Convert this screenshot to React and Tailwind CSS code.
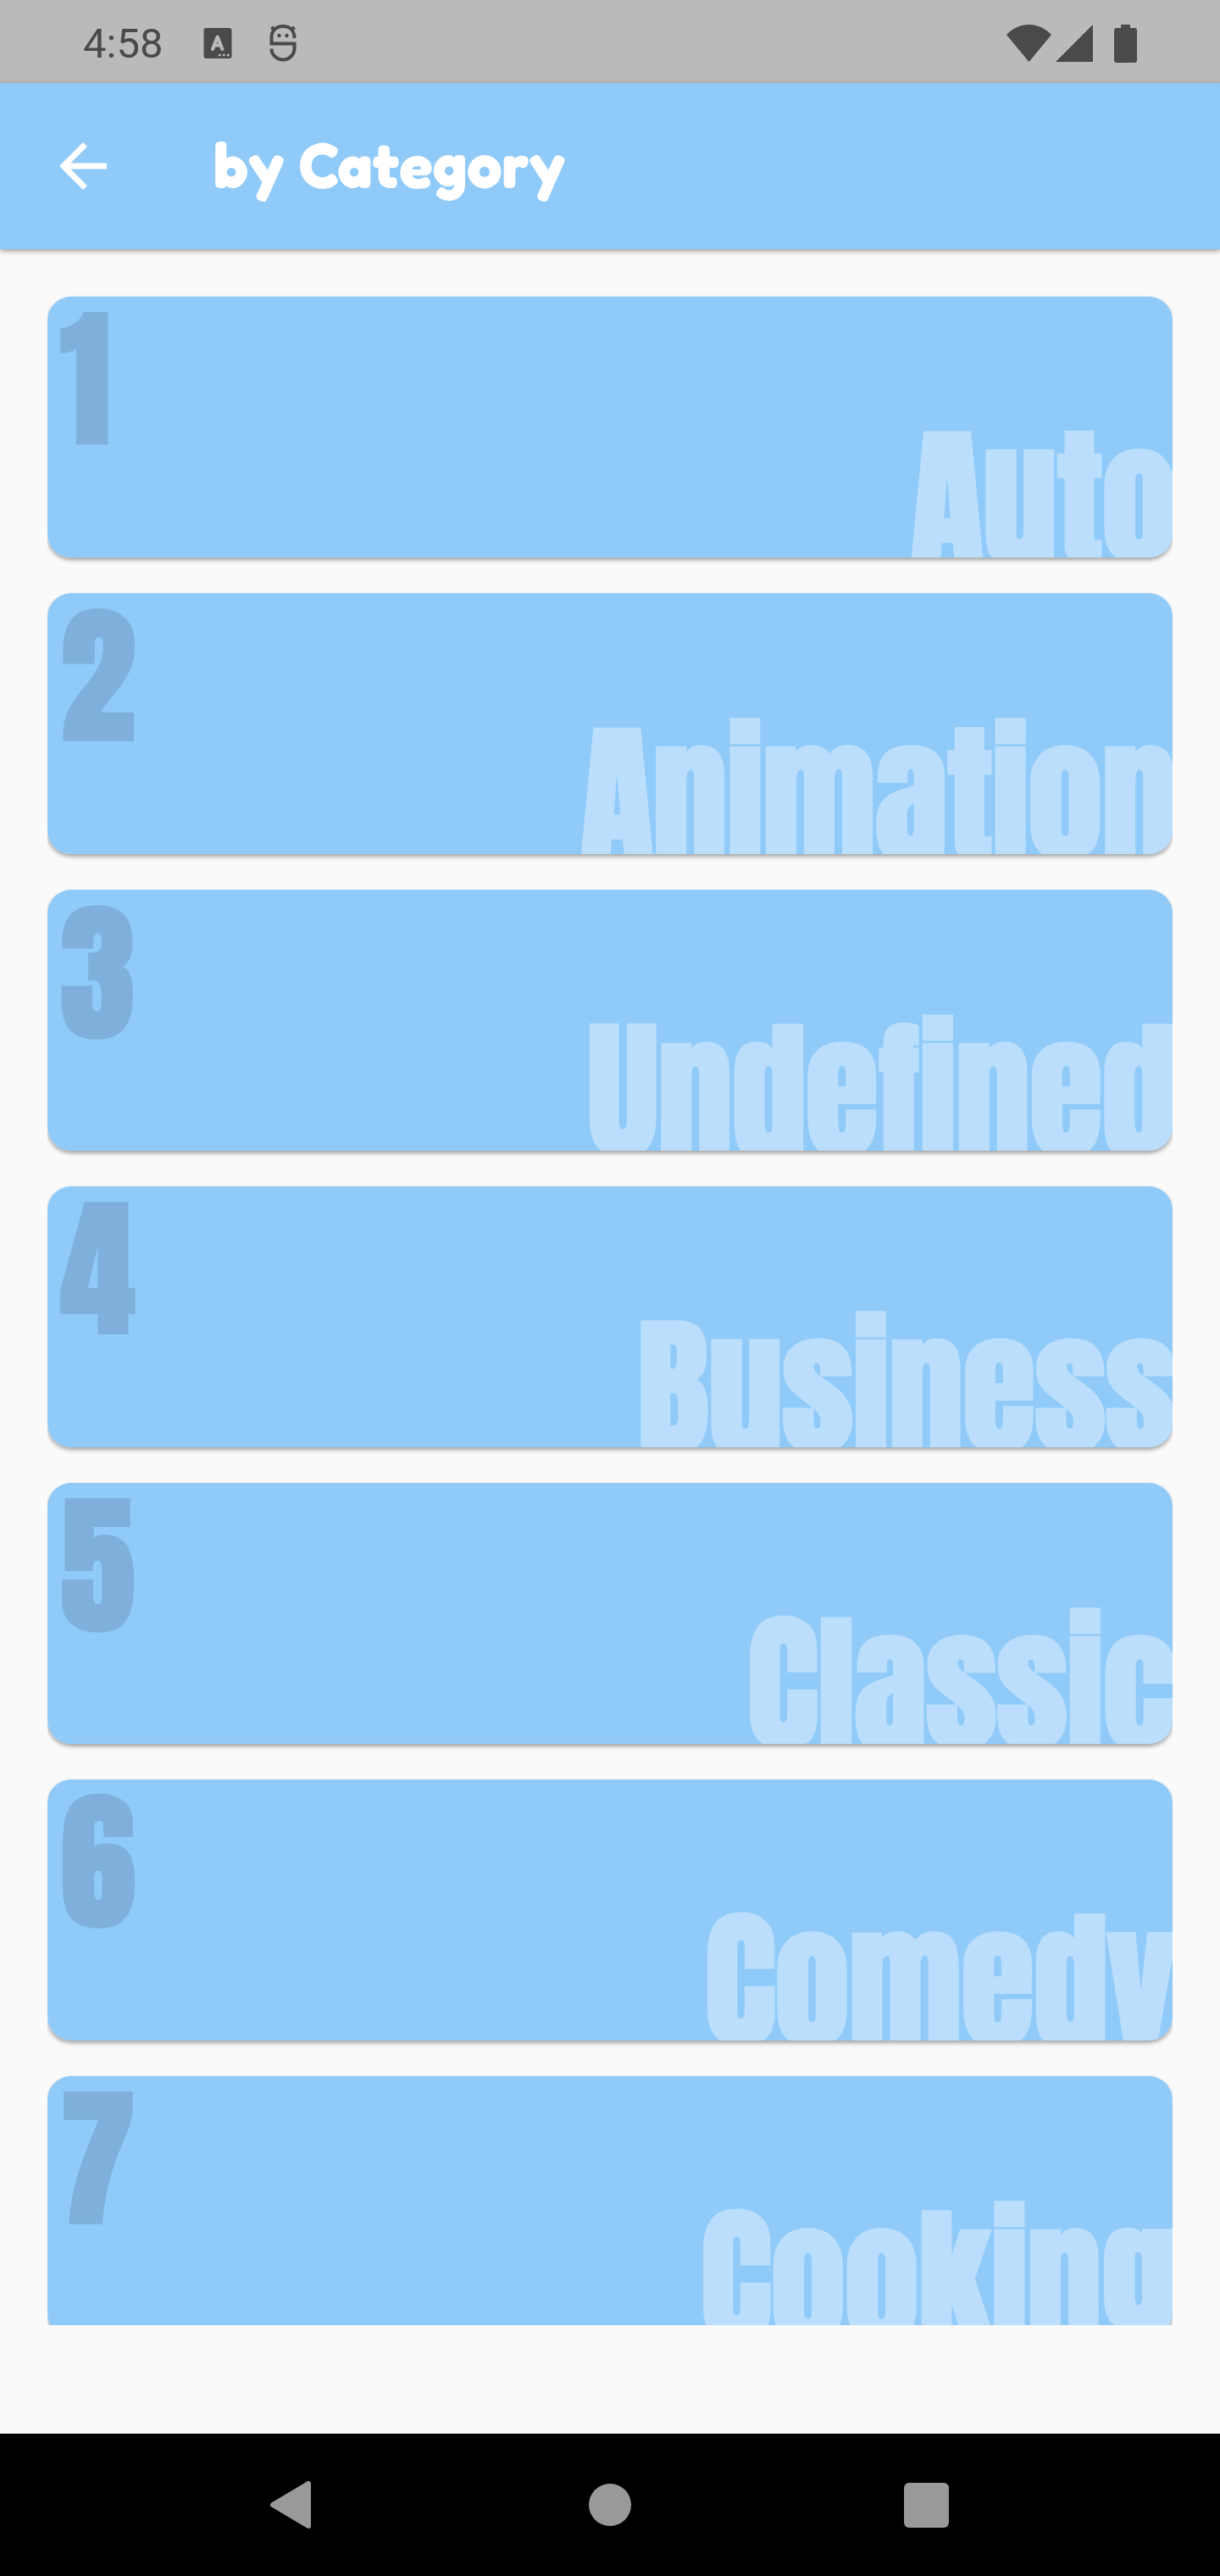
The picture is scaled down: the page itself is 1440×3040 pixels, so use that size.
const categories = ["Auto", "Animation", "Undefined", "Business", "Classic", "Comedy", "Cooking"];

function StatusBar() {
  return (
    <div className="flex h-[98px] shrink-0 items-center bg-[#bababa] px-[98px] text-[#4a4a4a]">
      <time className="pt-1 font-[Roboto,sans-serif] text-[49px] leading-none">4:58</time>
      <svg className="mt-1 ml-12 h-9 w-[34px]" viewBox="0 0 34 36" role="img" aria-label="Keyboard language">
        <rect x="0.5" width="33" height="36" rx="3" fill="currentColor" />
        <path d="M11 25 L16.7 10.5 L22.4 25 M13.5 20.5 H20" fill="none" stroke="#bababa" strokeWidth="4" strokeLinecap="round" strokeLinejoin="round" />
        <g fill="#bababa">
          <circle cx="19.3" cy="32" r="1.6" />
          <circle cx="24.3" cy="32" r="1.6" />
          <circle cx="29.3" cy="32" r="1.6" />
        </g>
      </svg>
      <svg className="mt-1 ml-11 h-[46px] w-8" viewBox="0 0 32 46" role="img" aria-label="System notification">
        <g fill="none" stroke="currentColor" strokeWidth="4">
          <path d="M29.5 17 C29.5 8 24 3 16 3 C8 3 2.5 8 2.5 16 V23.5 H29.5 V29 C29.5 37 23 42.5 16 42.5 C9 42.5 2.5 37 2.5 29.5" />
          <path d="M5.5 7 L2.5 4 M26.5 7 L29.5 4" />
        </g>
        <circle cx="11.5" cy="14" r="2.2" fill="currentColor" />
        <circle cx="20.5" cy="14" r="2.2" fill="currentColor" />
      </svg>
      <div className="mt-1 ml-auto flex items-center">
        <svg className="h-[46px] w-[53px]" viewBox="0 0 53 46" role="img" aria-label="Wi-Fi">
          <path d="M0 13 C15 -3 38 -3 53 13 L26.5 45 Z" fill="currentColor" />
        </svg>
        <svg className="ml-[5px] h-[46px] w-11" viewBox="0 0 44 46" role="img" aria-label="Mobile signal">
          <path d="M44 1 V45 H0 Z" fill="currentColor" />
        </svg>
        <svg className="ml-[25px] h-[46px] w-[27px]" viewBox="0 0 27 46" role="img" aria-label="Battery">
          <path d="M8 1 H19 V5 H24 Q27 5 27 8 V43 Q27 46 24 46 H3 Q0 46 0 43 V8 Q0 5 3 5 H8 Z" fill="currentColor" />
        </svg>
      </div>
    </div>
  );
}

function Header() {
  return (
    <header className="z-10 flex h-[196px] shrink-0 items-center bg-[#90caf9] px-14 text-white shadow-[0_2px_6px_rgba(0,0,0,0.4)]">
      <button type="button" aria-label="Back" className="flex size-[84px] items-center justify-center">
        <svg className="size-[84px]" viewBox="0 0 24 24" fill="currentColor">
          <path d="M20 11H7.83l5.59-5.59L12 4l-8 8 8 8 1.41-1.41L7.83 13H20v-2z" />
        </svg>
      </button>
      <h1 className="ml-28 pb-1 font-[Fredoka,Inter,sans-serif] text-[74px] leading-none font-bold">by Category</h1>
    </header>
  );
}

function CategoryCard({ number, name }) {
  return (
    <li className="h-[308px] shrink-0 rounded-[28px] shadow-[0_3px_5px_rgba(0,0,0,0.35)]">
      <a
        href={`#${name.toLowerCase()}`}
        className="flex h-full justify-between overflow-hidden rounded-[28px] bg-[#90caf9] font-[Anton,'Roboto_Condensed',sans-serif] text-[175px] leading-[196px] font-bold"
      >
        <span className="pl-4 text-[#7fb0db]">{number}</span>
        <span className="-mr-1 -mb-7 self-end text-[#badefb]">{name}</span>
      </a>
    </li>
  );
}

function NavBar() {
  return (
    <nav className="flex h-[168px] shrink-0 items-center justify-center gap-[317px] bg-black text-[#999]">
      <button type="button" aria-label="Back">
        <svg className="size-14" viewBox="0 0 56 56">
          <path d="M45 3 V53 L3 28 Z" fill="currentColor" stroke="currentColor" strokeWidth="6" strokeLinejoin="round" />
        </svg>
      </button>
      <button type="button" aria-label="Home" className="flex size-14 items-center justify-center">
        <span className="size-[50px] rounded-full bg-[#999]" />
      </button>
      <button type="button" aria-label="Recent apps" className="flex size-14 items-center justify-center">
        <span className="size-[53px] rounded-md bg-[#999]" />
      </button>
    </nav>
  );
}

export default function App() {
  return (
    <div className="flex h-screen flex-col bg-[#fafafa]">
      <StatusBar />
      <Header />
      <main className="flex min-h-0 flex-1 flex-col px-14 pb-32">
        <ul className="flex min-h-0 flex-1 flex-col gap-[42px] overflow-hidden pt-14">
          {categories.map((name, i) => (
            <CategoryCard key={name} number={i + 1} name={name} />
          ))}
        </ul>
      </main>
      <NavBar />
    </div>
  );
}
